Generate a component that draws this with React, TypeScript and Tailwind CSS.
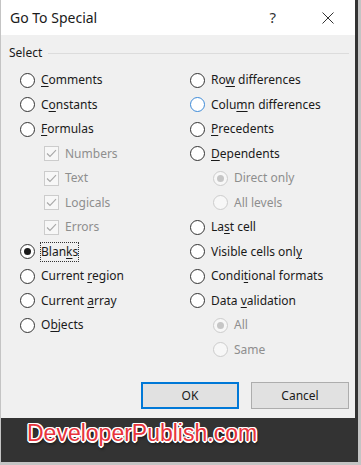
import React from "react";

type Item = {
  label: React.ReactNode;
  kind: "radio" | "check" | "subradio";
  checked?: boolean;
  disabled?: boolean;
  hover?: boolean;
  focus?: boolean;
};

// underline the access key letter
const k = (before: string, key: string, after: string) => (
  <>
    {before}
    <span className="underline decoration-1 underline-offset-2">{key}</span>
    {after}
  </>
);

const leftItems: Item[] = [
  { label: k("", "C", "omments"), kind: "radio" },
  { label: k("C", "o", "nstants"), kind: "radio" },
  { label: k("", "F", "ormulas"), kind: "radio" },
  { label: "Numbers", kind: "check", checked: true, disabled: true },
  { label: "Text", kind: "check", checked: true, disabled: true },
  { label: "Logicals", kind: "check", checked: true, disabled: true },
  { label: "Errors", kind: "check", checked: true, disabled: true },
  { label: k("Blan", "k", "s"), kind: "radio", checked: true, focus: true },
  { label: k("Current ", "r", "egion"), kind: "radio" },
  { label: k("Current ", "a", "rray"), kind: "radio" },
  { label: k("O", "b", "jects"), kind: "radio" },
];

const rightItems: Item[] = [
  { label: k("Ro", "w", " differences"), kind: "radio" },
  { label: k("Colu", "m", "n differences"), kind: "radio", hover: true },
  { label: k("", "P", "recedents"), kind: "radio" },
  { label: k("", "D", "ependents"), kind: "radio" },
  { label: "Direct only", kind: "subradio", checked: true, disabled: true },
  { label: "All levels", kind: "subradio", disabled: true },
  { label: k("La", "s", "t cell"), kind: "radio" },
  { label: k("Visible cells onl", "y", ""), kind: "radio" },
  { label: k("Condi", "t", "ional formats"), kind: "radio" },
  { label: k("Data ", "v", "alidation"), kind: "radio" },
  { label: "All", kind: "subradio", checked: true, disabled: true },
  { label: "Same", kind: "subradio", disabled: true },
];

function RadioDot({ checked, disabled, hover }: { checked?: boolean; disabled?: boolean; hover?: boolean }) {
  return (
    <span
      className={`flex h-[15px] w-[15px] shrink-0 items-center justify-center rounded-full border ${
        disabled ? "border-[#cccccc] bg-[#f7f7f7]" : hover ? "border-[#3c8ad8] bg-white" : "border-[#333333] bg-white"
      }`}
    >
      {checked && (
        <span className={`h-[7px] w-[7px] rounded-full ${disabled ? "bg-[#c6c6c6]" : "bg-[#1a1a1a]"}`} />
      )}
    </span>
  );
}

function CheckBox() {
  return (
    <span className="flex h-[15px] w-[15px] shrink-0 items-center justify-center border border-[#cccccc] bg-[#f7f7f7]">
      <svg width="11" height="9" viewBox="0 0 11 9" fill="none">
        <path d="M1 4.5 L4 7.5 L10 1.2" stroke="#a8a8a8" strokeWidth="1.1" />
      </svg>
    </span>
  );
}

function Row({ item }: { item: Item }) {
  const indent = item.kind === "radio" ? "" : item.kind === "check" ? "pl-[24px]" : "pl-[23px]";
  return (
    <div className={`flex h-[24.5px] items-center gap-[6px] ${indent}`}>
      {item.kind === "check" ? (
        <CheckBox />
      ) : (
        <RadioDot checked={item.checked} disabled={item.disabled} hover={item.hover} />
      )}
      <span
        className={`whitespace-nowrap leading-[16px] ${item.disabled ? "text-[#8e8e8e]" : "text-[#1a1a1a]"} ${
          item.focus ? "-ml-[1px] border border-dotted border-[#333] py-[1px]" : ""
        }`}
      >
        {item.label}
      </span>
    </div>
  );
}

export default function App() {
  return (
    <div className="h-[465px] w-[361px] bg-[#c4c4c4] pb-[3px] pl-[1px] pr-[3px] font-['Noto_Sans',sans-serif]">
      <div className="flex h-full flex-col bg-[#333333] pr-[3px]">
        {/* dialog */}
        <div className="flex h-[418px] w-[354px] flex-col bg-[#f0f0f0]">
          <div className="flex h-[35px] items-center bg-white pl-[9px] text-[14px] text-[#1a1a1a]">
            <span className="flex-1">Go To Special</span>
            <span className="mr-[46px] text-[15px] text-[#333]">?</span>
            <svg width="12" height="12" viewBox="0 0 12 12" className="mr-[21px]">
              <path d="M0.5 0.5 L11.5 11.5 M11.5 0.5 L0.5 11.5" stroke="#333" strokeWidth="1" />
            </svg>
          </div>

          <div className="flex items-center pl-[8px] pr-[6px] pt-[9px] text-[12px] text-[#1a1a1a]">
            <span>Select</span>
            <span className="ml-[6px] h-px flex-1 bg-[#dcdcdc]" />
          </div>

          <div className="grid grid-cols-[170px_1fr] pl-[19px] pt-[6px] text-[12px]">
            <div className="flex flex-col">
              {leftItems.map((it, i) => (
                <Row key={i} item={it} />
              ))}
            </div>
            <div className="flex flex-col">
              {rightItems.map((it, i) => (
                <Row key={i} item={it} />
              ))}
            </div>
          </div>

          <div className="mt-auto flex justify-end gap-[12px] pb-[9px] pr-[6px] text-[12px] text-[#1a1a1a]">
            <button className="h-[27px] w-[98px] border-2 border-[#0078d7] bg-[#e1e1e1]">OK</button>
            <button className="h-[27px] w-[98px] border border-[#adadad] bg-[#e1e1e1]">Cancel</button>
          </div>
        </div>

        {/* watermark */}
        <div className="pl-[26px] pt-[4px]">
          <span className="font-['Liberation_Sans',Arial,sans-serif] text-[23px] leading-[23px] text-[#e8343c] [text-shadow:1px_1px_0_#fff,-1px_-1px_0_#fff,1px_-1px_0_#fff,-1px_1px_0_#fff,0_1.5px_0_#fff,0_-1.5px_0_#fff,1.5px_0_0_#fff,-1.5px_0_0_#fff,1px_3px_3px_rgba(0,0,0,0.7)]">
            DeveloperPublish.com
          </span>
        </div>
      </div>
    </div>
  );
}
